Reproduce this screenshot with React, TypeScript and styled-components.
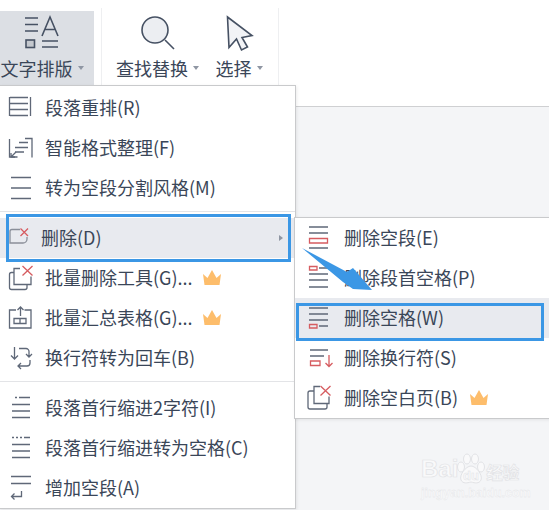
import { ReactNode } from "react";
import styled, { createGlobalStyle } from "styled-components";

const GlobalStyle = createGlobalStyle`
  html, body {
    margin: 0;
    padding: 0;
    background: #fff;
  }
  * {
    box-sizing: border-box;
  }
`;

const Page = styled.div`
  position: relative;
  width: 549px;
  height: 510px;
  overflow: hidden;
  display: flex;
  flex-direction: column;
  font-family: "Noto Sans CJK SC", "Noto Sans", sans-serif;
  font-size: 18px;
  color: #3a4658;
  background: #f4f5f7;
`;

const Toolbar = styled.div`
  flex: none;
  height: 107px;
  display: flex;
  align-items: flex-start;
  padding-top: 8px;
  background: #fff;
  border-bottom: 1px solid #cfd0d2;
`;

const Group = styled.div`
  display: flex;
  height: 77px;
  gap: 16px;
  padding: 3px 15px 0 14px;
  margin-left: 7px;
  border-left: 1px solid #eeeff1;
  border-right: 1px solid #eeeff1;
`;

const ToolButton = styled.div<{ $active?: boolean }>`
  display: flex;
  flex-direction: column;
  align-items: center;
  height: 74px;
  width: ${(p) => (p.$active ? "94px" : "auto")};
  margin-top: ${(p) => (p.$active ? "3px" : "0")};
  padding-right: ${(p) => (p.$active ? "10px" : "0")};
  background: ${(p) => (p.$active ? "#dcdfe4" : "transparent")};
`;

const ToolIcon = styled.svg`
  flex: none;
  width: 48px;
  height: 44px;
  fill: none;
  stroke: #465163;
  stroke-width: 1.6;
`;

const ToolLabel = styled.div`
  display: flex;
  align-items: center;
  height: 30px;
  line-height: 26px;
  padding-bottom: 4px;
  white-space: nowrap;
`;

const Caret = styled.span`
  width: 0;
  height: 0;
  margin-left: 5px;
  border-left: 3.5px solid transparent;
  border-right: 3.5px solid transparent;
  border-top: 4px solid #8f96a3;
`;

const Menu = styled.div<{ $left: number; $top: number; $width: number; $pad: number }>`
  position: absolute;
  left: ${(p) => p.$left}px;
  top: ${(p) => p.$top}px;
  width: ${(p) => p.$width}px;
  padding-top: ${(p) => p.$pad}px;
  background: #fff;
  border: 1px solid #c9cacc;
  box-shadow: 1px 1px 3px rgba(0, 0, 0, 0.08);
`;

const Item = styled.div<{ $active?: boolean; $indent: number }>`
  position: relative;
  display: flex;
  align-items: center;
  height: 40px;
  padding-left: ${(p) => p.$indent}px;
  white-space: nowrap;
  background: ${(p) => (p.$active ? "#e8eaef" : "transparent")};
`;

const ItemText = styled.span<{ $gap: number }>`
  margin-left: ${(p) => p.$gap}px;
  padding-bottom: 3px;
  line-height: 26px;
`;

const ItemIcon = styled.svg`
  flex: none;
  width: 32px;
  height: 32px;
  fill: none;
  stroke: #5f6878;
  stroke-width: 1.3;
`;

const Crown = styled.svg<{ $gap: number }>`
  flex: none;
  width: 18px;
  height: 15px;
  margin-left: ${(p) => p.$gap}px;
  margin-top: -2px;
  fill: #fdbd6b;
`;

const Chevron = styled.span`
  position: absolute;
  right: 12px;
  top: 17px;
  width: 0;
  height: 0;
  border-top: 3.5px solid transparent;
  border-bottom: 3.5px solid transparent;
  border-left: 4px solid #8f96a3;
`;

const Divider = styled.div`
  height: 10px;
  padding-top: 3px;
  &::before {
    content: "";
    display: block;
    height: 1px;
    background: #e3e4e7;
  }
`;

const Callout = styled.div<{ $l: number; $t: number; $w: number; $h: number }>`
  position: absolute;
  left: ${(p) => p.$l}px;
  top: ${(p) => p.$t}px;
  width: ${(p) => p.$w}px;
  height: ${(p) => p.$h}px;
  border: 3px solid #3b97e5;
  pointer-events: none;
`;

const Arrow = styled.svg`
  position: absolute;
  left: 295px;
  top: 240px;
  width: 90px;
  height: 60px;
`;

const Watermark = styled.div`
  position: absolute;
  left: 421px;
  top: 452px;
  width: 102px;
  height: 48px;
  white-space: nowrap;
  color: #f9f9fa;
  -webkit-text-stroke: 0.7px #e2e3e6;
`;

const MarkRow = styled.div`
  display: flex;
  align-items: flex-end;
  height: 32px;
  font-family: "Liberation Sans", sans-serif;
  font-weight: 700;
  font-size: 24px;
  line-height: 30px;
`;

const Paw = styled.svg`
  flex: none;
  width: 30px;
  height: 31px;
  margin-left: -2px;
  fill: #f9f9fa;
  stroke: #e2e3e6;
`;

const PawText = styled.text`
  font-family: "Liberation Sans", sans-serif;
  font-size: 13px;
  font-weight: 700;
  stroke-width: 0.5;
`;

const MarkCjk = styled.span`
  font-family: "Noto Sans CJK SC", sans-serif;
  font-size: 16.5px;
  line-height: 24px;
`;

const MarkUrl = styled.div`
  margin-top: 3px;
  font-family: "Liberation Sans", sans-serif;
  font-size: 12.5px;
  font-weight: 700;
  line-height: 12px;
  -webkit-text-stroke: 0.3px #e2e3e6;
`;

const RED = "#d65c60";

const Red = ({ d }: { d: string }) => <path d={d} stroke={RED} />;

const CrownIcon = ({ gap }: { gap: number }) => (
  <Crown $gap={gap} viewBox="0 0 18 15">
    <path d="M0 4l4.5 4L9 0l4.5 8L18 4l-1.5 11h-15z" />
  </Crown>
);

type Row = {
  label: string;
  view: string;
  icon: ReactNode;
  crown?: boolean;
};

const topRows: Row[] = [
  {
    label: "段落重排(R)",
    view: "4 92 32 32",
    icon: (
      <path d="M8.5 97v19M29.5 97v19M9 97.5h18M9 103.5h18M9 109.5h18M9 115.5h18" />
    ),
  },
  {
    label: "智能格式整理(F)",
    view: "4 132 32 32",
    icon: (
      <>
        <path d="M8.5 139v18h8M24 138.5h7v19M18 142.5h9M14 147.5h13M14 152h9" />
        <path d="M10 157l5-5M10 153v4h4" />
      </>
    ),
  },
  {
    label: "转为空段分割风格(M)",
    view: "4 172 32 32",
    icon: <path d="M10 177.5h20M10 188h20M10 198.5h20" />,
  },
];

const midRows: Row[] = [
  {
    label: "批量删除工具(G)...",
    view: "4 262 32 32",
    crown: true,
    icon: (
      <>
        <path d="M19 268.5h-6v16h17v-8" />
        <path d="M13 272.5h-2.500a2 2 0 0 0 -2 2v13a2 2 0 0 0 2 2h13.500a2 2 0 0 0 2-2v-2.500" />
        <Red d="M21.500 266l10 9.500M31.500 266l-10 9.500" />
      </>
    ),
  },
  {
    label: "批量汇总表格(G)...",
    view: "4 302 32 32",
    crown: true,
    icon: (
      <>
        <path d="M15 310h-6.500v18h21.500v-18h-6.500" />
        <path d="M19.500 316v-9M16.500 310l3-3 3 3" />
        <path d="M13 318.500h12v5h-12zM19 318.500v5" />
      </>
    ),
  },
  {
    label: "换行符转为回车(B)",
    view: "4 342 32 32",
    icon: (
      <>
        <path d="M13.500 347v12M10 355.500l3.500 3.500 3.500-3.500" />
        <path d="M18 348.500h7a3 3 0 0 1 3 3v5M25 354l3 3 3-3" />
        <path d="M29 360v3a3 3 0 0 1-3 3h-9M20 363l-3 3 3 3" />
      </>
    ),
  },
];

const bottomRows: Row[] = [
  {
    label: "段落首行缩进2字符(I)",
    view: "4 392 32 32",
    icon: (
      <path d="M14 397.500h2M18 397.500h11M11 404.500h18M11 411h18M11 417.500h18" />
    ),
  },
  {
    label: "段落首行缩进转为空格(C)",
    view: "4 432 32 32",
    icon: (
      <path d="M11 437.500h2M15 437.500h2M19 437.500h2M23 437.500h6M11 444.500h18M11 451h18M11 457.500h18" />
    ),
  },
  {
    label: "增加空段(A)",
    view: "4 472 32 32",
    icon: (
      <path d="M10 476.500h20M10 483.500h20M20.500 491v5.500h-10M13.500 493.500l-3 3 3 3" />
    ),
  },
];

const subRows: Row[] = [
  {
    label: "删除空段(E)",
    view: "303 222 32 32",
    icon: (
      <>
        <path d="M309 227h19M309 233h19M309 248h19" />
        <Red d="M309.500 238.500h18v4.500h-18z" />
      </>
    ),
  },
  {
    label: "删除段首空格(P)",
    view: "303 262 32 32",
    icon: (
      <>
        <Red d="M309.500 266.500h7.500v3.500h-7.500z" />
        <path d="M319 268h9M309 274h19M309 280h19M309 287h19" />
      </>
    ),
  },
  {
    label: "删除空格(W)",
    view: "303 302 32 32",
    icon: (
      <>
        <path d="M309 308h19M309 314h19M309 320h19M319 326h9" />
        <Red d="M309.500 324.500h7.500v3.500h-7.500z" />
      </>
    ),
  },
  {
    label: "删除换行符(S)",
    view: "303 342 32 32",
    icon: (
      <>
        <path d="M310 350h18M310 356h14" />
        <Red d="M310.500 361h9.500v4.500h-9.500zM329 355v11.500M325.500 363l3.500 3.500 3.500-3.500" />
      </>
    ),
  },
  {
    label: "删除空白页(B)",
    view: "303 382 32 32",
    crown: true,
    icon: (
      <>
        <path d="M320 386.500h-6v17h15v-7" />
        <path d="M314 391h-4a2 2 0 0 0-2 2v14a2 2 0 0 0 2 2h15a2 2 0 0 0 2-2v-3" />
        <Red d="M320.500 386l10 9.500M330.500 386l-10 9.500" />
      </>
    ),
  },
];

const MainItem = ({ row }: { row: Row }) => (
  <Item $indent={5}>
    <ItemIcon viewBox={row.view}>{row.icon}</ItemIcon>
    <ItemText $gap={8}>{row.label}</ItemText>
    {row.crown && <CrownIcon gap={10} />}
  </Item>
);

export default function App() {
  return (
    <Page>
      <GlobalStyle />
      <Toolbar>
        <ToolButton $active>
          <ToolIcon viewBox="20 11 48 44">
            <path d="M27 18h13M27 24.500h13M27 31h13M44 36l8-19 8 19M47 29.500h10M44 41h16M44 47h16" />
            <rect x="28" y="40" width="8.500" height="7.500" fill="#c4c8ce" />
          </ToolIcon>
          <ToolLabel>
            文字排版
            <Caret />
          </ToolLabel>
        </ToolButton>
        <Group>
          <ToolButton>
            <ToolIcon viewBox="134 11 48 44">
              <circle cx="155" cy="30" r="13" fill="#eceef2" />
              <path d="M165 40l9 9" />
            </ToolIcon>
            <ToolLabel>
              查找替换
              <Caret />
            </ToolLabel>
          </ToolButton>
          <ToolButton>
            <ToolIcon viewBox="216 11 48 44">
              <path
                d="M228.500 17l24.500 18.500-10 2 5.500 9.500-6 3-5-11-7.500 8.500z"
                fill="#f2f3f6"
              />
            </ToolIcon>
            <ToolLabel>
              选择
              <Caret />
            </ToolLabel>
          </ToolButton>
        </Group>
      </Toolbar>

      <Menu $left={-1} $top={85} $width={297} $pad={2}>
        {topRows.map((row) => (
          <MainItem key={row.label} row={row} />
        ))}
        <Divider />
        <Item $active $indent={5}>
          <ItemIcon viewBox="4 222 32 32">
            <path
              d="M19 229.500h-8a2 2 0 0 0-2 2v11.500h13a4 4 0 0 0 4-4v-2"
              stroke="#8a8f99"
            />
            <Red d="M19.500 228.500l7.500 7.500M27 228.500l-7.500 7.500" />
          </ItemIcon>
          <ItemText $gap={4}>删除(D)</ItemText>
          <Chevron />
        </Item>
        {midRows.map((row) => (
          <MainItem key={row.label} row={row} />
        ))}
        <Divider />
        {bottomRows.map((row) => (
          <MainItem key={row.label} row={row} />
        ))}
      </Menu>

      <Menu $left={294} $top={217} $width={262} $pad={0}>
        {subRows.map((row) => (
          <Item
            key={row.label}
            $active={row.label === "删除空格(W)"}
            $indent={8}
          >
            <ItemIcon viewBox={row.view}>{row.icon}</ItemIcon>
            <ItemText $gap={9}>{row.label}</ItemText>
            {row.crown && <CrownIcon gap={12} />}
          </Item>
        ))}
      </Menu>

      <Callout $l={6} $t={214} $w={285} $h={48} />
      <Callout $l={296} $t={303} $w={248} $h={38} />

      <Arrow viewBox="295 240 90 60">
        <path
          d="M302 248L347 272L353 268L372 290L353 289L343 282Z"
          fill="#3b97e5"
        />
      </Arrow>

      <Watermark>
        <MarkRow>
          Bai
          <Paw viewBox="0 0 30 31">
            <ellipse cx="5" cy="14" rx="3.500" ry="5" />
            <ellipse cx="11" cy="6" rx="3.500" ry="5" />
            <ellipse cx="19" cy="6" rx="3.500" ry="5" />
            <ellipse cx="25" cy="14" rx="3.500" ry="5" />
            <path d="M15 13c-5 0-12 9-10 14 2 4 6 3 10 2 4 1 8 2 10-2 2-5-5-14-10-14z" />
            <PawText x="7" y="27">
              du
            </PawText>
          </Paw>
          <MarkCjk>经验</MarkCjk>
        </MarkRow>
        <MarkUrl>jingyan.baidu.com</MarkUrl>
      </Watermark>
    </Page>
  );
}
